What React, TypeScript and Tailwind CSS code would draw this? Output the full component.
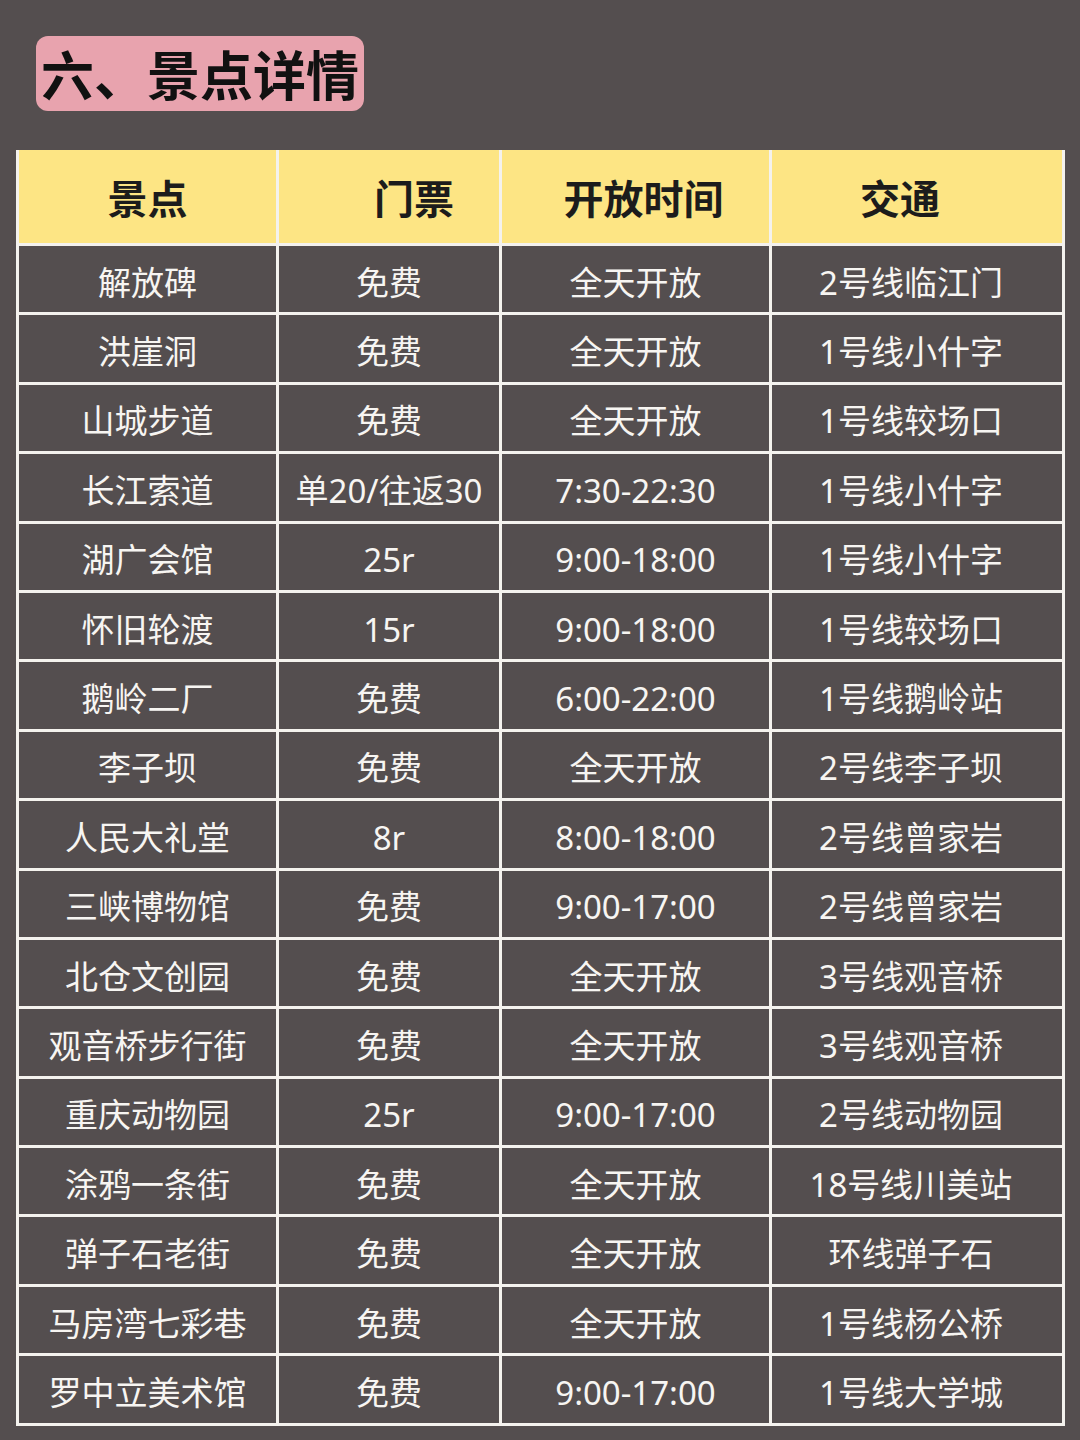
const rows: [string, string, string, string][] = [
  ['解放碑', '免费', '全天开放', '2号线临江门'],
  ['洪崖洞', '免费', '全天开放', '1号线小什字'],
  ['山城步道', '免费', '全天开放', '1号线较场口'],
  ['长江索道', '单20/往返30', '7:30-22:30', '1号线小什字'],
  ['湖广会馆', '25r', '9:00-18:00', '1号线小什字'],
  ['怀旧轮渡', '15r', '9:00-18:00', '1号线较场口'],
  ['鹅岭二厂', '免费', '6:00-22:00', '1号线鹅岭站'],
  ['李子坝', '免费', '全天开放', '2号线李子坝'],
  ['人民大礼堂', '8r', '8:00-18:00', '2号线曾家岩'],
  ['三峡博物馆', '免费', '9:00-17:00', '2号线曾家岩'],
  ['北仓文创园', '免费', '全天开放', '3号线观音桥'],
  ['观音桥步行街', '免费', '全天开放', '3号线观音桥'],
  ['重庆动物园', '25r', '9:00-17:00', '2号线动物园'],
  ['涂鸦一条街', '免费', '全天开放', '18号线川美站'],
  ['弹子石老街', '免费', '全天开放', '环线弹子石'],
  ['马房湾七彩巷', '免费', '全天开放', '1号线杨公桥'],
  ['罗中立美术馆', '免费', '9:00-17:00', '1号线大学城'],
];

const headers = ['景点', '门票', '开放时间', '交通'];
const headerPad = ['', 'pl-[50px]', 'pl-[16px]', 'pr-[34px]'];
const cellPad = ['', '', '', 'pr-[12px]'];

export default function App() {
  return (
    <div
      className="h-[1440px] w-[1080px] overflow-hidden bg-[#544e4f]"
      style={{ fontFamily: '"Noto Sans CJK SC", "Noto Sans", sans-serif' }}
    >
      <div className="pl-[36px] pt-[36px]">
        <div className="inline-flex h-[75px] items-center rounded-[12px] bg-[#e8a3ae] px-[5px]">
          <span className="text-[53px] font-bold leading-none text-[#111]">六、景点详情</span>
        </div>
      </div>

      <div className="ml-[16px] mt-[39px] w-[1049px]">
        <div className="grid grid-cols-[257px_220px_267px_290px] gap-[3px] bg-[#f4f2ee] p-[3px] pt-0">
          {headers.map((h, i) => (
            <div
              key={h}
              className={`flex h-[93px] items-center justify-center bg-[#fde584] text-[40px] font-bold text-[#1c1c1c] ${headerPad[i]}`}
            >
              {h}
            </div>
          ))}
          {rows.map((r) =>
            r.map((c, j) => (
              <div
                key={r[0] + j}
                className={`flex h-[66.4px] items-center justify-center bg-[#544e4f] pt-[6px] text-[33px] leading-none text-[#f7f5f2] ${cellPad[j]}`}
                style={{ fontFamily: '"Noto Sans", "Noto Sans CJK SC", sans-serif' }}
              >
                {c}
              </div>
            ))
          )}
        </div>
      </div>
    </div>
  );
}
